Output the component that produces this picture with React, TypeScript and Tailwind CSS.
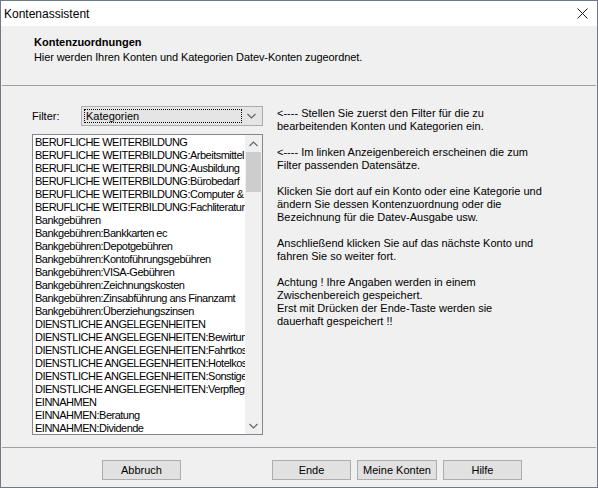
import React from 'react';

const items = [
    'BERUFLICHE WEITERBILDUNG',
    'BERUFLICHE WEITERBILDUNG:Arbeitsmittel',
    'BERUFLICHE WEITERBILDUNG:Ausbildung',
    'BERUFLICHE WEITERBILDUNG:Bürobedarf',
    'BERUFLICHE WEITERBILDUNG:Computer & Software',
    'BERUFLICHE WEITERBILDUNG:Fachliteratur',
    'Bankgebühren',
    'Bankgebühren:Bankkarten ec',
    'Bankgebühren:Depotgebühren',
    'Bankgebühren:Kontoführungsgebühren',
    'Bankgebühren:VISA-Gebühren',
    'Bankgebühren:Zeichnungskosten',
    'Bankgebühren:Zinsabführung ans Finanzamt',
    'Bankgebühren:Überziehungszinsen',
    'DIENSTLICHE ANGELEGENHEITEN',
    'DIENSTLICHE ANGELEGENHEITEN:Bewirtung',
    'DIENSTLICHE ANGELEGENHEITEN:Fahrtkosten',
    'DIENSTLICHE ANGELEGENHEITEN:Hotelkosten',
    'DIENSTLICHE ANGELEGENHEITEN:Sonstiges',
    'DIENSTLICHE ANGELEGENHEITEN:Verpflegung',
    'EINNAHMEN',
    'EINNAHMEN:Beratung',
    'EINNAHMEN:Dividende',
];

const hints: string[][] = [
    ['<---- Stellen Sie zuerst den Filter für die zu', 'bearbeitenden Konten und Kategorien ein.'],
    ['<---- Im linken Anzeigenbereich erscheinen die zum', 'Filter passenden Datensätze.'],
    [
        'Klicken Sie dort auf ein Konto oder eine Kategorie und',
        'ändern Sie dessen Kontenzuordnung oder die',
        'Bezeichnung für die Datev-Ausgabe usw.',
    ],
    ['Anschließend klicken Sie auf das nächste Konto und', 'fahren Sie so weiter fort.'],
    [
        'Achtung ! Ihre Angaben werden in einem',
        'Zwischenbereich gespeichert.',
        'Erst mit Drücken der Ende-Taste werden sie',
        'dauerhaft gespeichert !!',
    ],
];

const Chevron: React.FC<{ up?: boolean }> = ({ up }) => (
    <svg width="9" height="6" viewBox="0 0 9 6" className="block">
        <path
            d={up ? 'M0.5 5 L4.5 1 L8.5 5' : 'M0.5 1 L4.5 5 L8.5 1'}
            fill="none"
            stroke="#606060"
            strokeWidth="1.1"
        />
    </svg>
);

const DlgButton: React.FC<{ label: string; className?: string }> = ({ label, className = '' }) => (
    <button className={`w-[79px] h-[20px] bg-[#e1e1e1] border border-[#adadad] text-[11px] leading-none text-black ${className}`}>
        {label}
    </button>
);

export default function App() {
    return (
        <div
            className="w-[598px] h-[488px] flex flex-col bg-[#f0f0f0] border border-[#707a86] text-black text-[11px] overflow-hidden"
            style={{ fontFamily: '"Liberation Sans", Arial, sans-serif' }}
        >
            {/* title bar */}
            <div className="h-[25px] bg-white flex items-center justify-between pl-[3px] pr-[9px] shrink-0">
                <span className="text-[12px]">Kontenassistent</span>
                <svg width="11" height="11" viewBox="0 0 11 11">
                    <path d="M0.5 0.5 L10.5 10.5 M10.5 0.5 L0.5 10.5" stroke="#1a1a1a" strokeWidth="1" />
                </svg>
            </div>

            {/* header */}
            <div className="h-[59px] pl-[33px] pt-[9px] shrink-0 leading-[15px]">
                <div className="font-bold">Kontenzuordnungen</div>
                <div className="tracking-[-0.1px]">Hier werden Ihren Konten und Kategorien Datev-Konten zugeordnet.</div>
            </div>
            <div className="h-px bg-[#a0a0a0] mx-px shrink-0" />

            {/* main */}
            <div className="flex-1 flex pt-[20px] pl-[31px] min-h-0">
                <div className="w-[231px] flex flex-col">
                    <div className="flex items-center h-[20px]">
                        <span className="w-[49px]">Filter:</span>
                        <div className="w-[182px] h-[20px] bg-[#e5e5e5] border border-[#acacac] flex items-center px-[2px]">
                            <div className="flex-1 h-[14px] border border-dotted border-black flex items-center pl-[1px] leading-none">
                                Kategorien
                            </div>
                            <div className="w-[18px] flex justify-center">
                                <Chevron />
                            </div>
                        </div>
                    </div>
                    <div className="mt-[8px] h-[301px] bg-white border border-[#828790] flex">
                        <div className="flex-1 min-w-0 overflow-hidden pt-px pl-[2px] tracking-[-0.5px]">
                            {items.map((it) => (
                                <div key={it} className="h-[13px] leading-[13px] whitespace-nowrap">
                                    {it}
                                </div>
                            ))}
                        </div>
                        <div className="w-[17px] bg-[#f0f0f0] flex flex-col items-center">
                            <div className="h-[17px] flex items-center justify-center">
                                <Chevron up />
                            </div>
                            <div className="w-[15px] h-[40px] bg-[#cdcdcd]" />
                            <div className="flex-1" />
                            <div className="h-[17px] flex items-center justify-center">
                                <Chevron />
                            </div>
                        </div>
                    </div>
                </div>

                <div className="ml-[14px] flex flex-col gap-[13px] leading-[13px] pt-[1px]">
                    {hints.map((p, i) => (
                        <div key={i}>
                            {p.map((l) => (
                                <div key={l} className="whitespace-nowrap">{l}</div>
                            ))}
                        </div>
                    ))}
                </div>
            </div>

            {/* footer */}
            <div className="h-px bg-[#a0a0a0] mx-px shrink-0" />
            <div className="h-[39px] flex items-start pt-[12px] pl-[101px] shrink-0">
                <DlgButton label="Abbruch" />
                <DlgButton label="Ende" className="ml-[91px]" />
                <DlgButton label="Meine Konten" className="ml-[6px] w-[80px]" />
                <DlgButton label="Hilfe" className="ml-[6px] w-[78px]" />
            </div>
        </div>
    );
}
